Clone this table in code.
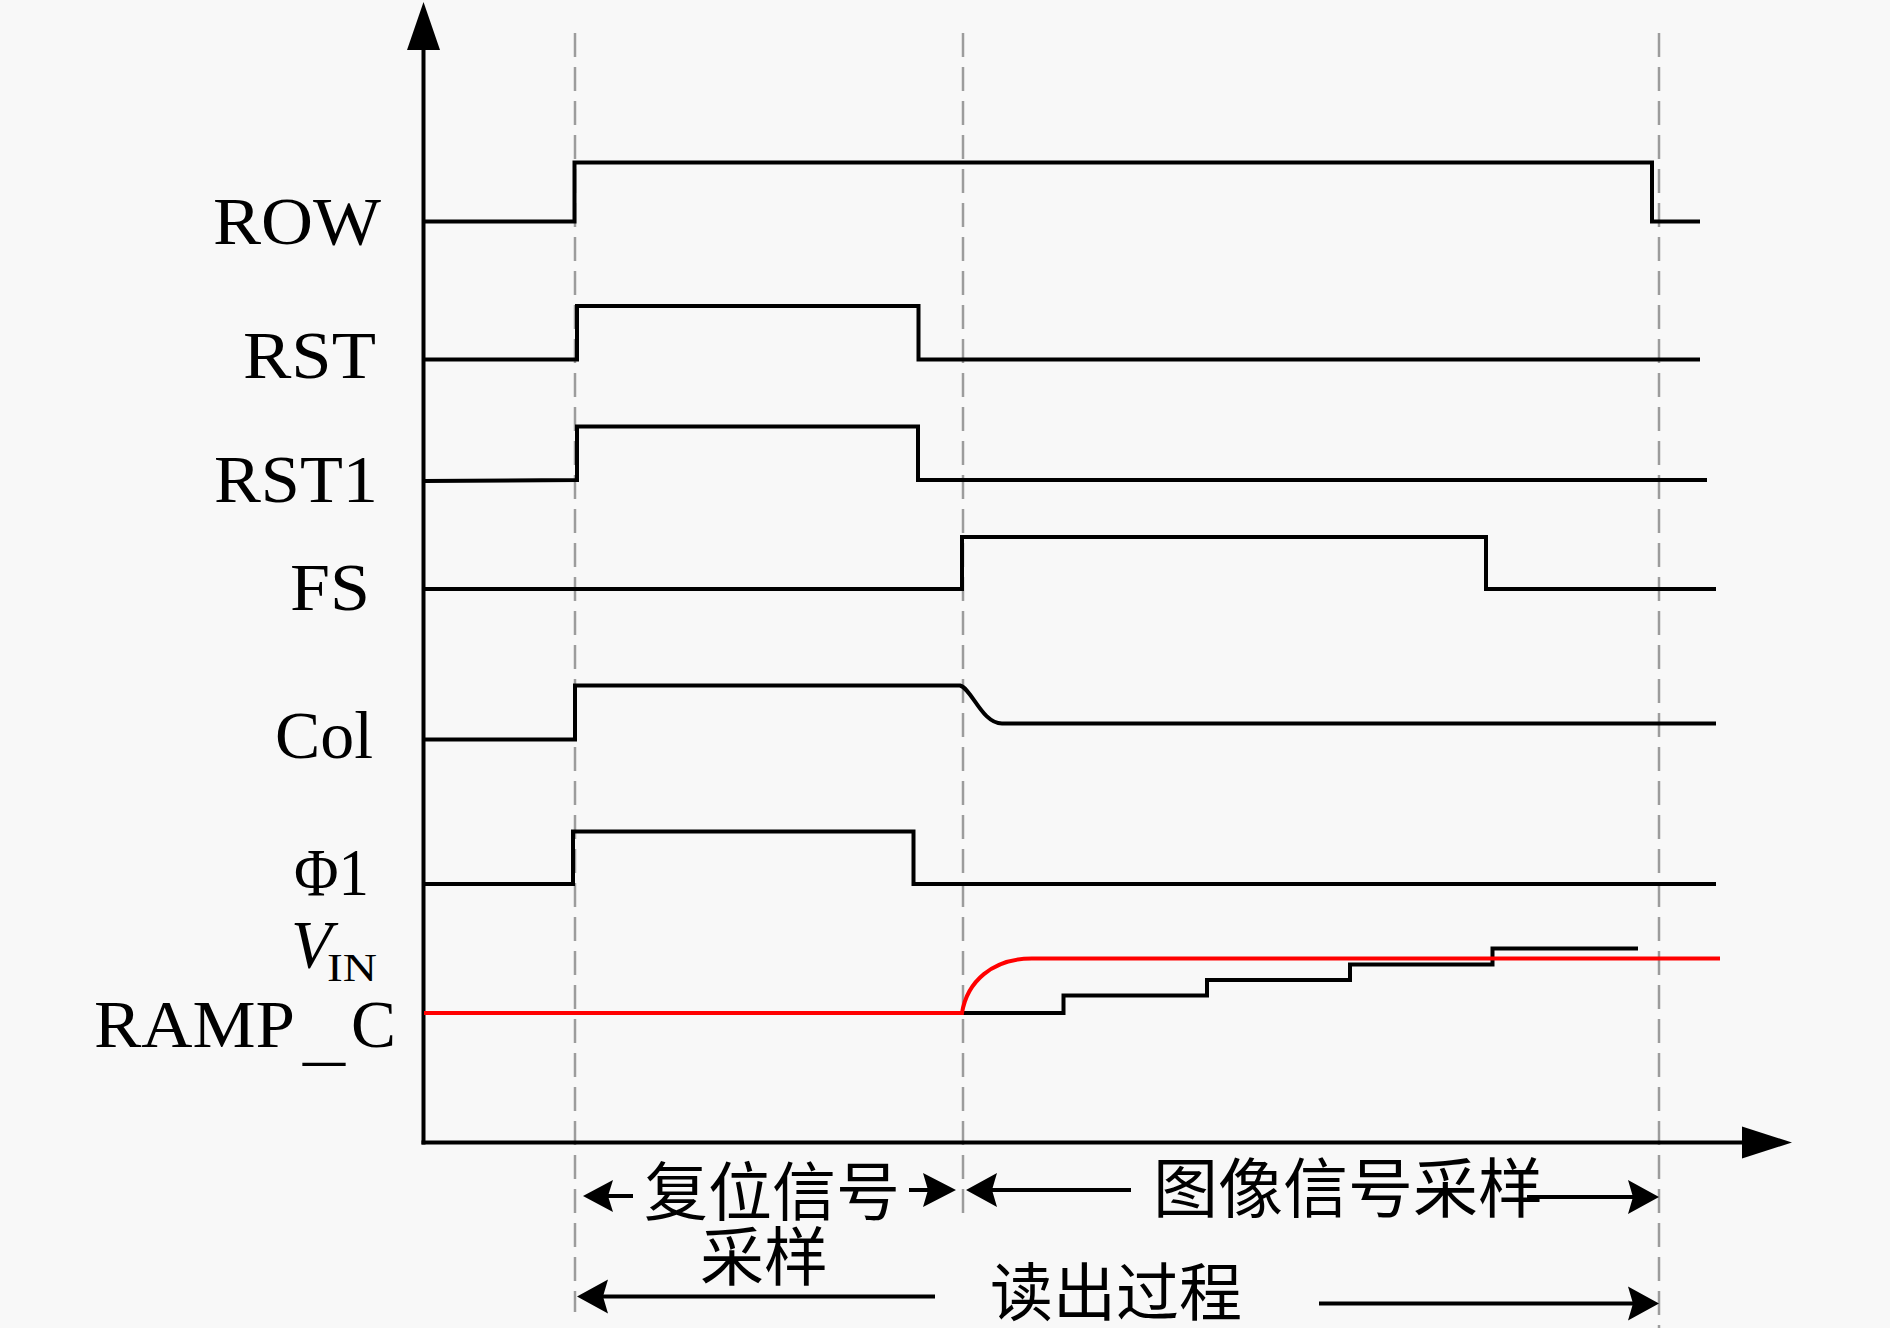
import React from "react";

const serif = '"Liberation Serif", "Times New Roman", serif';
const cjk = '"Liberation Serif", "Noto Sans CJK SC", sans-serif';

function ArrowHead({ tipX, y, dir, len = 30, half = 16 }: { tipX: number; y: number; dir: 1 | -1; len?: number; half?: number }) {
  // dir = 1 : pointing right ; -1 : pointing left
  const bx = tipX - dir * len;
  const nx = tipX - dir * (len - 5);
  return <path d={`M${tipX} ${y} L${bx} ${y - half} L${nx} ${y} L${bx} ${y + half} Z`} fill="#000" />;
}

function Label({ x, y, w, children, size = 67 }: { x: number; y: number; w: number; children: React.ReactNode; size?: number }) {
  return (
    <text x={x} y={y} textLength={w} lengthAdjust="spacingAndGlyphs" fontFamily={serif} fontSize={size} fill="#000">
      {children}
    </text>
  );
}

export default function App() {
  const sig = { fill: "none", stroke: "#000", strokeWidth: 4, strokeLinejoin: "miter" as const };
  const dash = { stroke: "#9c9c9c", strokeWidth: 2.5, strokeDasharray: "24 10" };
  return (
    <div className="w-[1890px] h-[1328px] bg-[#f8f8f8] overflow-hidden">
      <svg width="1890" height="1328" viewBox="0 0 1890 1328" className="block">
        {/* dashed guide lines */}
        <line x1="575" y1="33" x2="575" y2="1312" {...dash} />
        <line x1="963" y1="33" x2="963" y2="1216" {...dash} />
        <line x1="1659" y1="33" x2="1659" y2="1328" {...dash} />

        {/* axes */}
        <line x1="423.5" y1="46" x2="423.5" y2="1144.5" stroke="#000" strokeWidth="4" />
        <path d="M423.5 2 L440 50 L407 50 Z" fill="#000" />
        <line x1="421.5" y1="1142.5" x2="1746" y2="1142.5" stroke="#000" strokeWidth="4" />
        <path d="M1792 1142.5 L1742 1126.5 L1742 1158.5 Z" fill="#000" />

        {/* signals */}
        <path d="M424 221.5 H574.5 V162.5 H1652 V221.5 H1700" {...sig} />
        <path d="M424 359.5 H577 V306 H918.5 V359.5 H1700" {...sig} />
        <path d="M424 481 L577 480 V426.5 H918 V480 H1707" {...sig} />
        <path d="M424 589 H962 V537 H1486 V589 H1716" {...sig} />
        <path d="M424 739.5 H575 V685.5 H960 C972 689 982 723.5 1002 723.5 H1716" {...sig} />
        <path d="M424 884 H573 V831.5 H913.5 V884 H1716" {...sig} />
        <path d="M962 1013 H1063.5 V995.5 H1207 V980 H1350 V964.5 H1492.5 V948.5 H1638" {...sig} />
        <path d="M424 1013 H962 C967 982 992 958.5 1032 958.5 H1720" fill="none" stroke="#ff0000" strokeWidth="4" />

        {/* labels */}
        <Label x={213} y={244} w={168}>ROW</Label>
        <Label x={243} y={378} w={133}>RST</Label>
        <Label x={214} y={502} w={164}>RST1</Label>
        <Label x={290} y={610} w={80}>FS</Label>
        <Label x={275} y={758} w={98}>Col</Label>
        <Label x={294} y={895} w={75}>Φ1</Label>
        <text x={291} y={967} fontFamily={serif} fontSize={67} fontStyle="italic" fill="#000">V</text>
        <text x={327} y={981} textLength={50} lengthAdjust="spacingAndGlyphs" fontFamily={serif} fontSize={41} fill="#000">IN</text>
        <text x={94} y={1047} fontFamily={serif} fontSize={67} fill="#000">
          <tspan x={94} textLength={201} lengthAdjust="spacingAndGlyphs">RAMP</tspan>
          <tspan x={303} dy={10} textLength={42} lengthAdjust="spacingAndGlyphs">_</tspan>
          <tspan x={351} dy={-10} textLength={45} lengthAdjust="spacingAndGlyphs">C</tspan>
        </text>

        {/* bottom annotations */}
        <line x1="606" y1="1196" x2="633" y2="1196" stroke="#000" strokeWidth="4" />
        <ArrowHead tipX={583} y={1196} dir={-1} len={30} half={16} />
        <text x={644} y={1215} fontFamily={cjk} fontSize={64} fill="#000">复位信号</text>
        <line x1="909" y1="1190" x2="928" y2="1190" stroke="#000" strokeWidth="4" />
        <ArrowHead tipX={956} y={1190} dir={1} len={33} half={17} />

        <line x1="990" y1="1190" x2="1131" y2="1190" stroke="#000" strokeWidth="4" />
        <ArrowHead tipX={966} y={1190} dir={-1} len={31} half={17} />
        <text x={1153} y={1212} fontFamily={cjk} fontSize={65} fill="#000">图像信号采样</text>
        <line x1="1527" y1="1197" x2="1634" y2="1197" stroke="#000" strokeWidth="4" />
        <ArrowHead tipX={1659} y={1197} dir={1} len={31} half={17} />

        <text x={700} y={1280} fontFamily={cjk} fontSize={64} fill="#000">采样</text>

        <line x1="603" y1="1296.5" x2="935" y2="1296.5" stroke="#000" strokeWidth="4" />
        <ArrowHead tipX={577} y={1296.5} dir={-1} len={31} half={17} />
        <text x={990} y={1315} fontFamily={cjk} fontSize={63} fill="#000">读出过程</text>
        <line x1="1319" y1="1303.5" x2="1634" y2="1303.5" stroke="#000" strokeWidth="4" />
        <ArrowHead tipX={1659} y={1303.5} dir={1} len={31} half={17} />
      </svg>
    </div>
  );
}
